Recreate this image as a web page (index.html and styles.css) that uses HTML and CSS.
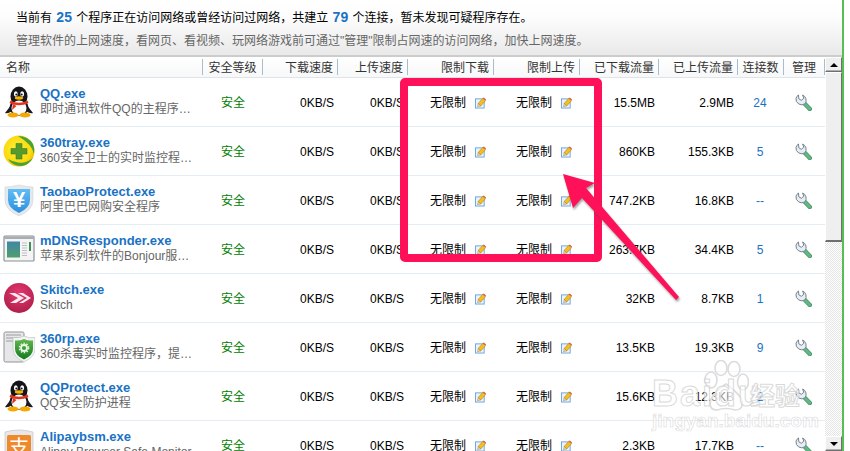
FILE: index.html
```html
<!DOCTYPE html>
<html lang="zh-CN">
<head>
<meta charset="utf-8">
<title>网络监控</title>
<link rel="stylesheet" href="styles.css">
</head>
<body>
<svg class="defs" width="0" height="0" aria-hidden="true">
  <defs>
    <radialGradient id="yel" cx=".45" cy=".45" r=".6"><stop offset="0" stop-color="#fff23a"/><stop offset=".75" stop-color="#fbd80e"/><stop offset="1" stop-color="#e9b400"/></radialGradient>
    <linearGradient id="blu" x1="0" y1="0" x2="0" y2="1"><stop offset="0" stop-color="#62bdf4"/><stop offset="1" stop-color="#2a8fe0"/></linearGradient>
    <linearGradient id="pnl" x1="0" y1="0" x2="0" y2="1"><stop offset="0" stop-color="#3f86a8"/><stop offset="1" stop-color="#4f9f6c"/></linearGradient>
    <linearGradient id="grn" x1="0" y1="0" x2="0" y2="1"><stop offset="0" stop-color="#62b84e"/><stop offset="1" stop-color="#14791f"/></linearGradient>
    <radialGradient id="skt" cx=".5" cy=".35" r=".75"><stop offset="0" stop-color="#e23a6e"/><stop offset="1" stop-color="#a91a46"/></radialGradient>
    <symbol id="i-qq" viewBox="0 0 32 32">
      <path d="M9 18 L2 27 Q5 28 9 25Z M23 18 L30 27 Q27 28 23 25Z" fill="#1b1b22"/>
      <ellipse cx="16" cy="10.500" rx="8.500" ry="10" fill="#14141a"/>
      <ellipse cx="16" cy="21.500" rx="9.500" ry="8.500" fill="#17171d"/>
      <ellipse cx="16" cy="22" rx="7.500" ry="7.500" fill="#fbfbfb"/>
      <ellipse cx="12.800" cy="8" rx="1.900" ry="2.700" fill="#fff"/>
      <ellipse cx="19.200" cy="8" rx="1.900" ry="2.700" fill="#fff"/>
      <circle cx="13.300" cy="8.500" r="1" fill="#111"/>
      <circle cx="18.700" cy="8.500" r="1" fill="#111"/>
      <ellipse cx="16" cy="12" rx="4.200" ry="1.700" fill="#f7b500"/>
      <path d="M7.500 14.500 Q16 19 24.500 14.500 L25.500 17 Q16 21.500 6.500 17Z" fill="#e2341c"/>
      <path d="M10 18 L9 24 L13.500 20Z" fill="#e2341c"/>
      <ellipse cx="10" cy="29" rx="5.500" ry="2.400" fill="#f5a800"/>
      <ellipse cx="22" cy="29" rx="5.500" ry="2.400" fill="#f5a800"/>
    </symbol>
    <symbol id="i-360" viewBox="0 0 32 32">
      <circle cx="16" cy="16" r="15.500" fill="url(#yel)"/>
      <path d="M5 24 Q9 30.500 18 31 Q26 30 30 23 Q23 29 15 27.500 Q9 26.500 5 24Z" fill="#4aa233"/>
      <path d="M15 1 Q25 1 30 9 Q32 14 31 19 Q29 9 15 1Z" fill="#4aa233"/>
      <path d="M13 8.500 h6 v5 h5 v5.500 h-5 v5 h-6 v-5 h-5 v-5.500 h5z" fill="#559a2a" stroke="#3f7f1e" stroke-width=".6"/>
    </symbol>
    <symbol id="i-tb" viewBox="0 0 32 32">
      <path d="M16 1 Q8 3 2 3 L2 16 Q2 26 16 32 Q30 26 30 16 L30 3 Q24 3 16 1Z" fill="#e6e9ec" stroke="#cfd4d8" stroke-width=".6"/>
      <path d="M5 5 H27 V16 Q27 24 16 29 Q5 24 5 16Z" fill="url(#blu)"/>
      <text x="16" y="23" class="svg-glyph" font-size="22" text-anchor="middle" fill="#fff">¥</text>
    </symbol>
    <symbol id="i-win" viewBox="0 0 32 32">
      <rect x="1" y="3" width="30" height="25" rx="1" fill="#f4f4f4" stroke="#8a8f96" stroke-width="1.200"/>
      <rect x="1.500" y="3.500" width="29" height="2.500" fill="#a8adb2"/>
      <rect x="4" y="8.500" width="13" height="16" fill="url(#pnl)"/>
      <path d="M19 10h5M19 12.500h5M19 15h5M19 17.500h5M19 20h5M19 22.500h5" stroke="#bcbfc2" stroke-width="1"/>
      <rect x="26" y="9" width="2" height="9" fill="#3d8f5a"/>
    </symbol>
    <symbol id="i-sk" viewBox="0 0 32 32">
      <circle cx="16" cy="16" r="15" fill="url(#skt)"/>
      <path d="M6 11 L15 16 L7 21 L13 21 L21 16 L12 11Z M15 11 L24 16 L16 21 L20 21 L28 16 L20 11Z" fill="#fde9ef"/>
    </symbol>
    <symbol id="i-rp" viewBox="0 0 32 32">
      <rect x="1" y="1" width="20" height="30" rx="1.500" fill="#e6e7e8" stroke="#8f9396"/>
      <path d="M3 4h15M3 7h15M3 10h7" stroke="#9a9ea2" stroke-width="1.200"/>
      <path d="M21 5 Q26 7.500 32 6.500 V18 Q32 26 21 31 Q10 26 10 18 V6.500 Q16 7.500 21 5Z" fill="#f4f4f4" stroke="#b8bbbe" stroke-width=".6"/>
      <path d="M21 8 Q25 10 30 9.500 V18 Q30 24.500 21 28.500 Q12 24.500 12 18 V9.500 Q17 10 21 8Z" fill="url(#grn)"/>
      <circle cx="21" cy="17" r="3" fill="none" stroke="#eef8e8" stroke-width="1.800"/>
      <circle cx="21" cy="17" r="4.700" fill="none" stroke="#eef8e8" stroke-width="1.300" stroke-dasharray="1.500 1.500"/>
    </symbol>
    <symbol id="i-ali" viewBox="0 0 32 32">
      <path d="M2 3 Q16 -1 30 3 V30 Q16 33 2 30Z" fill="#e8e8e8" stroke="#bcbcbc" stroke-width=".6"/>
      <rect x="4" y="6" width="24" height="24" rx="1.500" fill="#ee8a2c"/>
      <text x="16" y="26" class="svg-glyph-cjk" font-size="20" text-anchor="middle" fill="#fff">支</text>
    </symbol>
    <symbol id="i-pen" viewBox="0 0 12 12">
      <rect x=".5" y="1.500" width="9.500" height="10" fill="#eaf3fc" stroke="#6ba1dc"/>
      <path d="M3.500 6.500 L8.500 .9 L11.500 3.400 L6.300 9.200Z" fill="#f6bf1a" stroke="#a8741a" stroke-width=".6"/>
      <path d="M8.500 .9 L9.500 0 L12 2.200 L11.500 3.400Z" fill="#d8584a"/>
      <path d="M3.500 6.500 L2.700 10 L6.300 9.200Z" fill="#e8d6a8" stroke="#8a6a30" stroke-width=".4"/>
    </symbol>
    <symbol id="i-wr" viewBox="0 0 17 17">
      <path d="M9.500 9.500 L14.800 15" stroke="#4b9568" stroke-width="4.400" stroke-linecap="round"/>
      <path d="M9.500 9.500 L14.800 15" stroke="#62b884" stroke-width="2.800" stroke-linecap="round"/>
      <path d="M3.500 1 L3.800 4.800 L6.300 6.300 L8.800 4.300 L7.600 1 A5.800 5.800 0 0 1 10 9.800 A5.800 5.800 0 0 1 1 4.200 A5.800 5.800 0 0 1 3.500 1Z" fill="#e6edf3" stroke="#74838f" stroke-width="1"/>
    </symbol>
  </defs>
</svg>

<div class="page">
  <div class="main">
    <header class="banner">
      <p class="summary">当前有 <b class="num">25</b> 个程序正在访问网络或曾经访问过网络，共建立 <b class="num">79</b> 个连接，暂未发现可疑程序存在。</p>
      <p class="tip">管理软件的上网速度，看网页、看视频、玩网络游戏前可通过"管理"限制占网速的访问网络，加快上网速度。</p>
    </header>
    <div class="list">
      <div class="table">
        <div class="grid head">
          <span class="h left">名称</span>
          <span class="h center">安全等级</span>
          <span class="h right">下载速度</span>
          <span class="h right">上传速度</span>
          <span class="h right">限制下载</span>
          <span class="h right">限制上传</span>
          <span class="h right">已下载流量</span>
          <span class="h right">已上传流量</span>
          <span class="h center">连接数</span>
          <span class="h center">管理</span>
        </div>

        <div class="grid row">
          <div class="prog"><svg class="ico"><use href="#i-qq"/></svg><div class="meta"><a class="exe">QQ.exe</a><span class="desc">即时通讯软件QQ的主程序…</span></div></div>
          <span class="safe">安全</span><span class="val">0KB/S</span><span class="val">0KB/S</span>
          <div class="limit">无限制<svg class="pen"><use href="#i-pen"/></svg></div>
          <div class="limit">无限制<svg class="pen"><use href="#i-pen"/></svg></div>
          <span class="val">15.5MB</span><span class="val">2.9MB</span><span class="conn">24</span>
          <div class="tool"><svg class="wr"><use href="#i-wr"/></svg></div>
        </div>
        <div class="grid row">
          <div class="prog"><svg class="ico"><use href="#i-360"/></svg><div class="meta"><a class="exe">360tray.exe</a><span class="desc">360安全卫士的实时监控程…</span></div></div>
          <span class="safe">安全</span><span class="val">0KB/S</span><span class="val">0KB/S</span>
          <div class="limit">无限制<svg class="pen"><use href="#i-pen"/></svg></div>
          <div class="limit">无限制<svg class="pen"><use href="#i-pen"/></svg></div>
          <span class="val">860KB</span><span class="val">155.3KB</span><span class="conn">5</span>
          <div class="tool"><svg class="wr"><use href="#i-wr"/></svg></div>
        </div>
        <div class="grid row">
          <div class="prog"><svg class="ico"><use href="#i-tb"/></svg><div class="meta"><a class="exe">TaobaoProtect.exe</a><span class="desc">阿里巴巴网购安全程序</span></div></div>
          <span class="safe">安全</span><span class="val">0KB/S</span><span class="val">0KB/S</span>
          <div class="limit">无限制<svg class="pen"><use href="#i-pen"/></svg></div>
          <div class="limit">无限制<svg class="pen"><use href="#i-pen"/></svg></div>
          <span class="val">747.2KB</span><span class="val">16.8KB</span><span class="conn">--</span>
          <div class="tool"><svg class="wr"><use href="#i-wr"/></svg></div>
        </div>
        <div class="grid row">
          <div class="prog"><svg class="ico"><use href="#i-win"/></svg><div class="meta"><a class="exe">mDNSResponder.exe</a><span class="desc">苹果系列软件的Bonjour服…</span></div></div>
          <span class="safe">安全</span><span class="val">0KB/S</span><span class="val">0KB/S</span>
          <div class="limit">无限制<svg class="pen"><use href="#i-pen"/></svg></div>
          <div class="limit">无限制<svg class="pen"><use href="#i-pen"/></svg></div>
          <span class="val">263.7KB</span><span class="val">34.4KB</span><span class="conn">5</span>
          <div class="tool"><svg class="wr"><use href="#i-wr"/></svg></div>
        </div>
        <div class="grid row">
          <div class="prog"><svg class="ico"><use href="#i-sk"/></svg><div class="meta"><a class="exe">Skitch.exe</a><span class="desc">Skitch</span></div></div>
          <span class="safe">安全</span><span class="val">0KB/S</span><span class="val">0KB/S</span>
          <div class="limit">无限制<svg class="pen"><use href="#i-pen"/></svg></div>
          <div class="limit">无限制<svg class="pen"><use href="#i-pen"/></svg></div>
          <span class="val">32KB</span><span class="val">8.7KB</span><span class="conn">1</span>
          <div class="tool"><svg class="wr"><use href="#i-wr"/></svg></div>
        </div>
        <div class="grid row">
          <div class="prog"><svg class="ico"><use href="#i-rp"/></svg><div class="meta"><a class="exe">360rp.exe</a><span class="desc">360杀毒实时监控程序，提…</span></div></div>
          <span class="safe">安全</span><span class="val">0KB/S</span><span class="val">0KB/S</span>
          <div class="limit">无限制<svg class="pen"><use href="#i-pen"/></svg></div>
          <div class="limit">无限制<svg class="pen"><use href="#i-pen"/></svg></div>
          <span class="val">13.5KB</span><span class="val">19.3KB</span><span class="conn">9</span>
          <div class="tool"><svg class="wr"><use href="#i-wr"/></svg></div>
        </div>
        <div class="grid row">
          <div class="prog"><svg class="ico"><use href="#i-qq"/></svg><div class="meta"><a class="exe">QQProtect.exe</a><span class="desc">QQ安全防护进程</span></div></div>
          <span class="safe">安全</span><span class="val">0KB/S</span><span class="val">0KB/S</span>
          <div class="limit">无限制<svg class="pen"><use href="#i-pen"/></svg></div>
          <div class="limit">无限制<svg class="pen"><use href="#i-pen"/></svg></div>
          <span class="val">15.6KB</span><span class="val">12.3KB</span><span class="conn">2</span>
          <div class="tool"><svg class="wr"><use href="#i-wr"/></svg></div>
        </div>
        <div class="grid row">
          <div class="prog"><svg class="ico"><use href="#i-ali"/></svg><div class="meta"><a class="exe">Alipaybsm.exe</a><span class="desc">Alipay Browser Safe Monitor</span></div></div>
          <span class="safe">安全</span><span class="val">0KB/S</span><span class="val">0KB/S</span>
          <div class="limit">无限制<svg class="pen"><use href="#i-pen"/></svg></div>
          <div class="limit">无限制<svg class="pen"><use href="#i-pen"/></svg></div>
          <span class="val">2.3KB</span><span class="val">17.7KB</span><span class="conn">--</span>
          <div class="tool"><svg class="wr"><use href="#i-wr"/></svg></div>
        </div>
      </div>
      <div class="scrollbar">
        <div class="sb-btn"><span class="tri-up"></span></div>
        <div class="sb-thumb"></div>
        <div class="sb-track"></div>
        <div class="sb-btn"><span class="tri-down"></span></div>
      </div>
    </div>
  </div>
  <div class="edge"></div>

  <div class="mark-box"></div>
  <svg class="mark-arrow" width="850" height="451" viewBox="0 0 850 451" aria-hidden="true">
    <path d="M563 174 L595 183 L586 188 L679 297 L676 300 L582 198 L573 208Z" fill="#ff1159"/>
  </svg>

  <div class="wm">
    <svg class="wm-paw" viewBox="0 0 46 54" aria-hidden="true">
      <g fill="rgba(255,255,255,.55)" stroke="#dcdcdc" stroke-width="1.600">
        <ellipse cx="8" cy="20" rx="6" ry="8"/>
        <ellipse cx="18" cy="8" rx="6" ry="7.500"/>
        <ellipse cx="31" cy="9" rx="6" ry="7.500"/>
        <ellipse cx="40" cy="22" rx="5.500" ry="8"/>
        <path d="M23 24 Q32 30 38 38 Q42 50 32 50 Q23 47 14 50 Q5 50 8 39 Q13 30 23 24Z"/>
      </g>
    </svg>
    <span class="wm-bai">Baidu</span>
    <span class="wm-cn">经验</span>
    <span class="wm-url">jingyan.baidu.com</span>
  </div>
</div>
</body>
</html>
```

FILE: styles.css
```css
* { box-sizing: border-box; }
html, body { margin: 0; padding: 0; background: #fff; overflow: hidden; }
body { font: 12px/16px "Liberation Sans", "Noto Sans CJK SC", sans-serif; color: #000; }
.defs { position: absolute; }
.svg-glyph { font-family: "Liberation Sans", sans-serif; font-weight: 700; }
.svg-glyph-cjk { font-family: "Noto Sans CJK SC", sans-serif; }

.page { position: relative; width: 850px; height: 451px; display: flex; overflow: hidden; background: #fff; }
.main { width: 842px; display: flex; flex-direction: column; }
.edge { width: 8px; border-left: 2px solid #5dbb55; background: #fff; }

.banner {
  height: 57px;
  padding: 9px 0 0 16px;
  background: linear-gradient(#fff 0, #fdfdfd 15px, #e9e9e9 55px);
  border-bottom: 2px solid #ccc;
  flex: none;
}
.summary { margin: 0; line-height: 17px; color: #000; }
.num { color: #1a72c4; font-size: 14px; margin: 0 1px; }
.tip { margin: 6px 0 0; line-height: 17px; color: #666; }

.list { flex: 1; min-height: 0; display: flex; }
.table { width: 825px; overflow: hidden; }
.grid {
  display: grid;
  grid-template-columns: 203px 60px 75px 70px 86px 86px 79px 79px 46px 41px;
  align-items: center;
}
.head { height: 21px; background: linear-gradient(#fff, #f7f8f9); border-bottom: 1px solid #dfe4e8; color: #333; }
.h { height: 16px; line-height: 18px; border-right: 1px solid #a9bccb; padding-right: 4px; white-space: nowrap; }
.left { padding-left: 6px; }
.center { text-align: center; padding-right: 0; }
.right { text-align: right; }

.row { height: 49px; border-bottom: 1px solid #e3edf5; background: #fff; }
.prog { display: flex; align-items: center; gap: 5px; padding-left: 3px; overflow: hidden; }
.ico { width: 32px; height: 32px; flex: none; }
.meta { display: flex; flex-direction: column; min-width: 0; margin-top: -1px; }
.exe { font-size: 13px; font-weight: 700; color: #1a72c4; line-height: 15px; white-space: nowrap; }
.desc { color: #666; line-height: 17px; white-space: nowrap; }
.safe { color: #008000; padding: 2px 0 0 18px; }
.val { text-align: right; padding: 2px 4px 0 0; white-space: nowrap; }
.limit { display: flex; align-items: center; gap: 9px; padding: 2px 0 0 22px; white-space: nowrap; }
.pen { width: 11px; height: 12px; flex: none; }
.conn { text-align: center; color: #1a72c4; padding: 2px 2px 0 0; }
.tool { padding-left: 11px; display: flex; }
.wr { width: 17px; height: 17px; }

.scrollbar { width: 17px; display: flex; flex-direction: column; }
.sb-btn {
  height: 15px; flex: none; display: flex; align-items: center; justify-content: center;
  background: #efefef; border: 1px solid; border-color: #fff #6f6f6f #6f6f6f #fff;
  box-shadow: inset 0 -1px 0 #b0b0b0;
}
.tri-up { border: 4px solid transparent; border-top: 0; border-bottom: 4px solid #000; }
.tri-down { border: 4px solid transparent; border-bottom: 0; border-top: 4px solid #000; }
.sb-thumb {
  height: 170px; flex: none; background: #efefef;
  border: 1px solid; border-color: #fff #6f6f6f #6f6f6f #fff;
  border-bottom-width: 2px;
}
.sb-track {
  flex: 1;
  background-color: #fff;
  background-image: conic-gradient(#e4e4e4 25%, #fff 0 50%, #e4e4e4 0 75%, #fff 0);
  background-size: 2px 2px;
}

.mark-box {
  position: absolute; left: 400px; top: 78px; width: 202px; height: 184px;
  border: 8px solid #ff1159; border-radius: 5px;
}
.mark-arrow {
  position: absolute; left: 0; top: 0;
  filter: drop-shadow(1px 2px 1px rgba(80, 80, 80, .55));
}

.wm { position: absolute; left: 0; top: 0; width: 850px; height: 451px; pointer-events: none; }
.wm-paw { position: absolute; left: 703px; top: 360px; width: 46px; height: 54px; }
.wm-bai, .wm-cn, .wm-url {
  position: absolute; white-space: nowrap;
  color: rgba(255, 255, 255, .6);
  -webkit-text-stroke: 1px rgba(205, 205, 205, .75);
}
.wm-bai { left: 652px; top: 376px; font: 700 36px/36px "Liberation Sans", sans-serif; letter-spacing: 2px; }
.wm-cn { left: 750px; top: 380px; font: 700 25px/28px "Noto Sans CJK SC", sans-serif; }
.wm-url { left: 652px; top: 411px; font: 700 19px/20px "Liberation Sans", sans-serif; -webkit-text-stroke-width: .6px; }
```
